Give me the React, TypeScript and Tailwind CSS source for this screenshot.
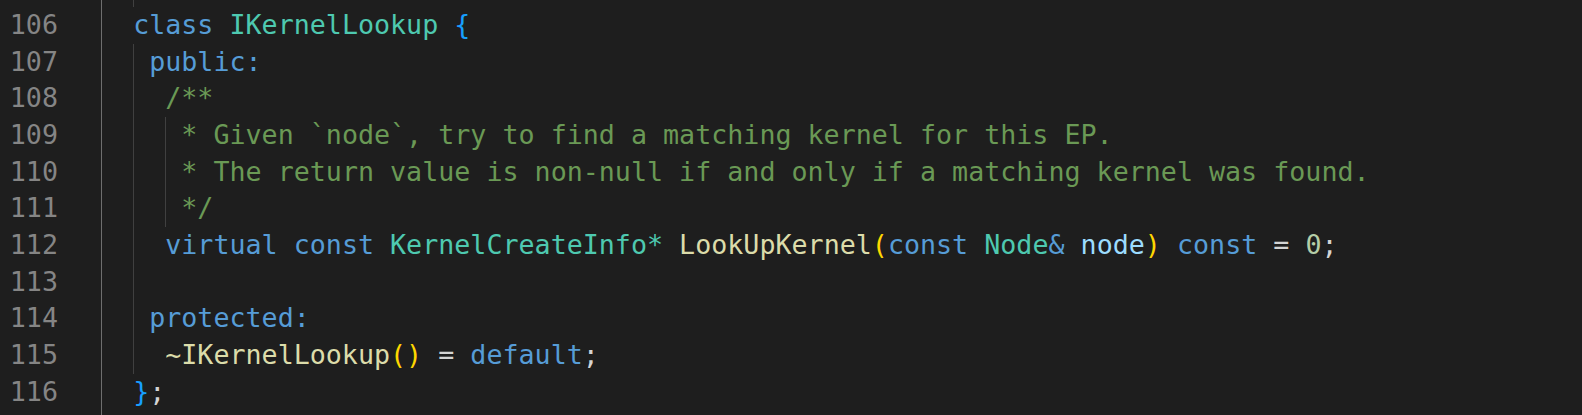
import React from "react";

type Tok = [string, string];

const KW = "text-[#569cd6]";
const TY = "text-[#4ec9b0]";
const CM = "text-[#6a9955]";
const FN = "text-[#dcdcaa]";
const GOLD = "text-[#ffd700]";
const BL = "text-[#179fff]";
const PL = "text-[#d4d4d4]";
const VAR = "text-[#9cdcfe]";
const NUM = "text-[#b5cea8]";

interface Line {
  num: number;
  toks: Tok[];
  guides: number[];
}

const lines: Line[] = [
  { num: 106, toks: [["  ", PL], ["class", KW], [" ", PL], ["IKernelLookup", TY], [" ", PL], ["{", BL]], guides: [] },
  { num: 107, toks: [["   ", PL], ["public:", KW]], guides: [2] },
  { num: 108, toks: [["    ", PL], ["/**", CM]], guides: [2] },
  { num: 109, toks: [["     ", PL], ["* Given `node`, try to find a matching kernel for this EP.", CM]], guides: [2, 4] },
  { num: 110, toks: [["     ", PL], ["* The return value is non-null if and only if a matching kernel was found.", CM]], guides: [2, 4] },
  { num: 111, toks: [["     ", PL], ["*/", CM]], guides: [2, 4] },
  {
    num: 112,
    toks: [
      ["    ", PL],
      ["virtual", KW],
      [" ", PL],
      ["const", KW],
      [" ", PL],
      ["KernelCreateInfo*", TY],
      [" ", PL],
      ["LookUpKernel", FN],
      ["(", GOLD],
      ["const", KW],
      [" ", PL],
      ["Node", TY],
      ["&", KW],
      [" ", PL],
      ["node", VAR],
      [")", GOLD],
      [" ", PL],
      ["const", KW],
      [" = ", PL],
      ["0", NUM],
      [";", PL],
    ],
    guides: [2],
  },
  { num: 113, toks: [], guides: [2] },
  { num: 114, toks: [["   ", PL], ["protected:", KW]], guides: [2] },
  {
    num: 115,
    toks: [["    ", PL], ["~IKernelLookup", FN], ["()", GOLD], [" = ", PL], ["default", KW], [";", PL]],
    guides: [2],
  },
  { num: 116, toks: [["  ", PL], ["}", BL], [";", PL]], guides: [] },
];

function Guides({ guides }: { guides: number[] }) {
  return (
    <>
      <div className="absolute left-0 top-0 bottom-0 w-px bg-[#6e6e6e]" />
      {guides.includes(2) && <div className="absolute left-[2ch] top-0 bottom-0 w-px bg-[#404040]" />}
      {guides.includes(4) && <div className="absolute left-[4ch] top-0 bottom-0 w-px bg-[#404040]" />}
    </>
  );
}

export default function App() {
  return (
    <div
      className="w-[1582px] h-[415px] overflow-hidden bg-[#1e1e1e] text-[26.68px] leading-[36.67px]"
      style={{ fontFamily: '"DejaVu Sans Mono", monospace' }}
    >
      <div className="flex h-[7px]">
        <div className="w-[101px] shrink-0" />
        <div className="relative flex-1">
          <Guides guides={[2]} />
        </div>
      </div>
      {lines.map((l) => (
        <div key={l.num} className="flex h-[36.67px]">
          <div className="w-[101px] shrink-0 pr-[43px] text-right text-[#858585]">{l.num}</div>
          <div className="relative flex-1 whitespace-pre">
            <Guides guides={l.guides} />
            {l.toks.map((t, i) => (
              <span key={i} className={t[1]}>
                {t[0]}
              </span>
            ))}
          </div>
        </div>
      ))}
      <div className="flex h-[10px]">
        <div className="w-[101px] shrink-0" />
        <div className="relative flex-1">
          <Guides guides={[]} />
        </div>
      </div>
    </div>
  );
}
